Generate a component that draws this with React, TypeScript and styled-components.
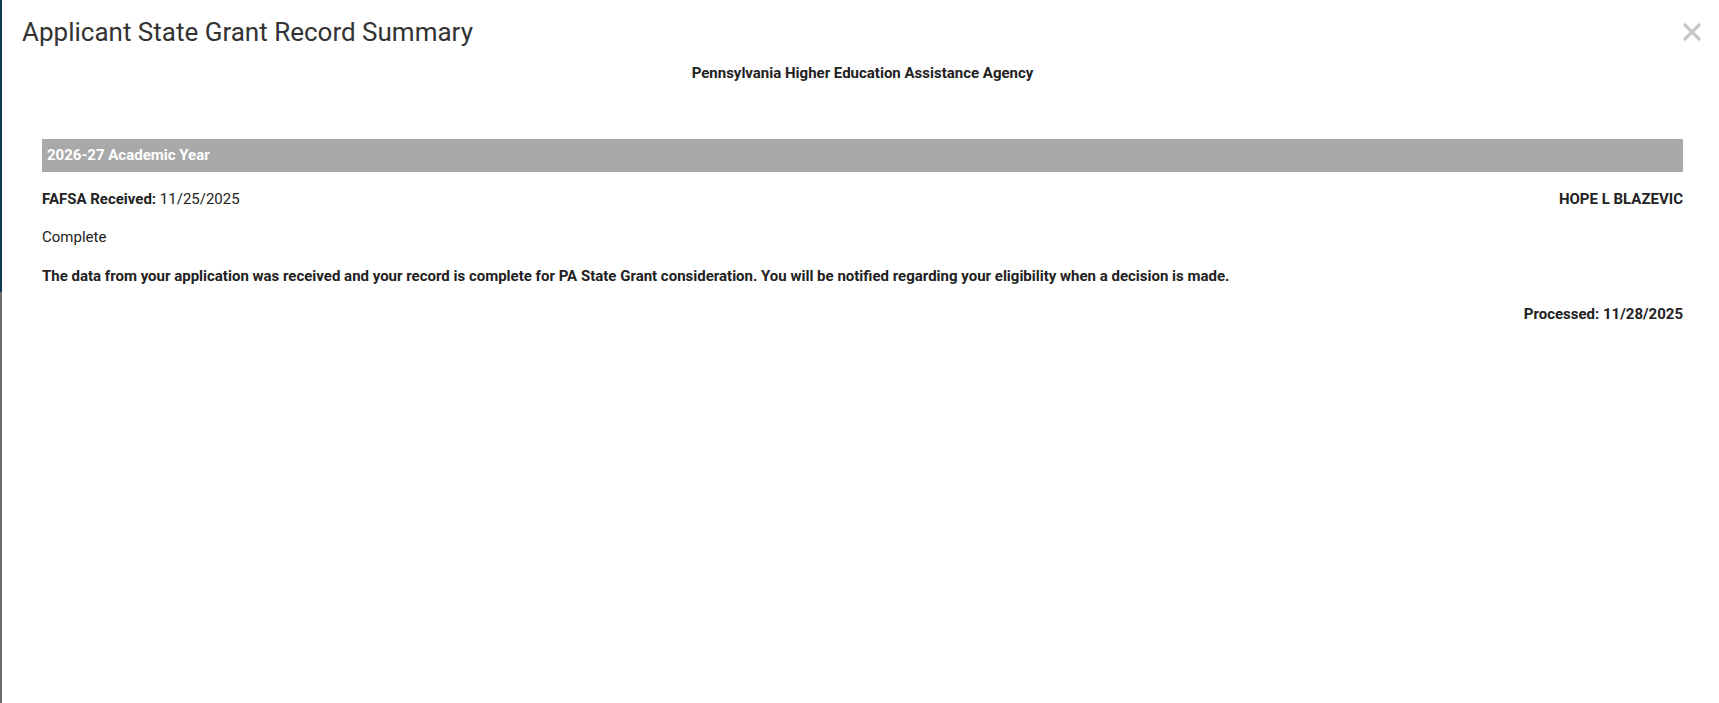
import styled, { createGlobalStyle } from 'styled-components';

const GlobalStyle = createGlobalStyle`
  html, body {
    margin: 0;
    padding: 0;
    background: #ffffff;
  }
  body {
    font-family: Roboto, "Liberation Sans", Arial, sans-serif;
    color: #333333;
  }
`;

const Page = styled.div`
  display: flex;
  min-height: 100vh;
`;

const Backdrop = styled.div`
  width: 2px;
  flex: 0 0 2px;
  background: linear-gradient(to bottom, #0c3a52 0, #0c3a52 292px, #6b6b6b 292px);
`;

const Modal = styled.div`
  flex: 1;
  display: flex;
  flex-direction: column;
  background: #ffffff;
`;

const Header = styled.div`
  display: flex;
  align-items: flex-start;
  justify-content: space-between;
  padding: 15px 18px 0 20px;
`;

const Title = styled.h4`
  margin: 0;
  font-size: 26px;
  font-weight: 400;
  line-height: 34px;
  color: #333333;
`;

const CloseButton = styled.button`
  border: 0;
  background: none;
  padding: 0;
  margin-top: 8px;
  width: 18px;
  height: 18px;
  cursor: pointer;
  color: #c8c8c8;

  svg {
    display: block;
  }
`;

const Agency = styled.div`
  text-align: center;
  font-size: 15px;
  font-weight: 700;
  line-height: 20px;
  margin-top: 14px;
  padding: 0 36px 0 40px;
  color: #222222;
`;

const Body = styled.div`
  padding: 56px 36px 0 40px;
  display: flex;
  flex-direction: column;
`;

const YearBar = styled.div`
  height: 33px;
  line-height: 33px;
  background: #a9a9a9;
  color: #ffffff;
  font-size: 15px;
  font-weight: 700;
  padding-left: 5px;
`;

const Row = styled.div<{ $gap: number; $align?: 'left' | 'right' }>`
  display: flex;
  justify-content: ${p => (p.$align === 'right' ? 'flex-end' : 'space-between')};
  margin-top: ${p => p.$gap}px;
  font-size: 15px;
  line-height: 20px;
  color: #222222;
`;

const Strong = styled.span`
  font-weight: 700;
`;

const CloseIcon = () => (
  <svg width="18" height="18" viewBox="0 0 18 18" aria-hidden="true">
    <path d="M1 1 L17 17 M17 1 L1 17" stroke="currentColor" strokeWidth="3.4" strokeLinecap="butt" fill="none" />
  </svg>
);

const App = () => {
  return (
    <>
      <GlobalStyle />
      <Page>
        <Backdrop />
        <Modal>
          <Header>
            <Title>Applicant State Grant Record Summary</Title>
            <CloseButton aria-label="Close">
              <CloseIcon />
            </CloseButton>
          </Header>
          <Agency>Pennsylvania Higher Education Assistance Agency</Agency>
          <Body>
            <YearBar>2026-27 Academic Year</YearBar>
            <Row $gap={17}>
              <span>
                <Strong>FAFSA Received:</Strong> 11/25/2025
              </span>
              <Strong>HOPE L BLAZEVIC</Strong>
            </Row>
            <Row $gap={18}>
              <span>Complete</span>
            </Row>
            <Row $gap={19}>
              <Strong>
                The data from your application was received and your record is complete for PA State Grant
                consideration. You will be notified regarding your eligibility when a decision is made.
              </Strong>
            </Row>
            <Row $gap={18} $align="right">
              <Strong>Processed: 11/28/2025</Strong>
            </Row>
          </Body>
        </Modal>
      </Page>
    </>
  );
};

export default App;
